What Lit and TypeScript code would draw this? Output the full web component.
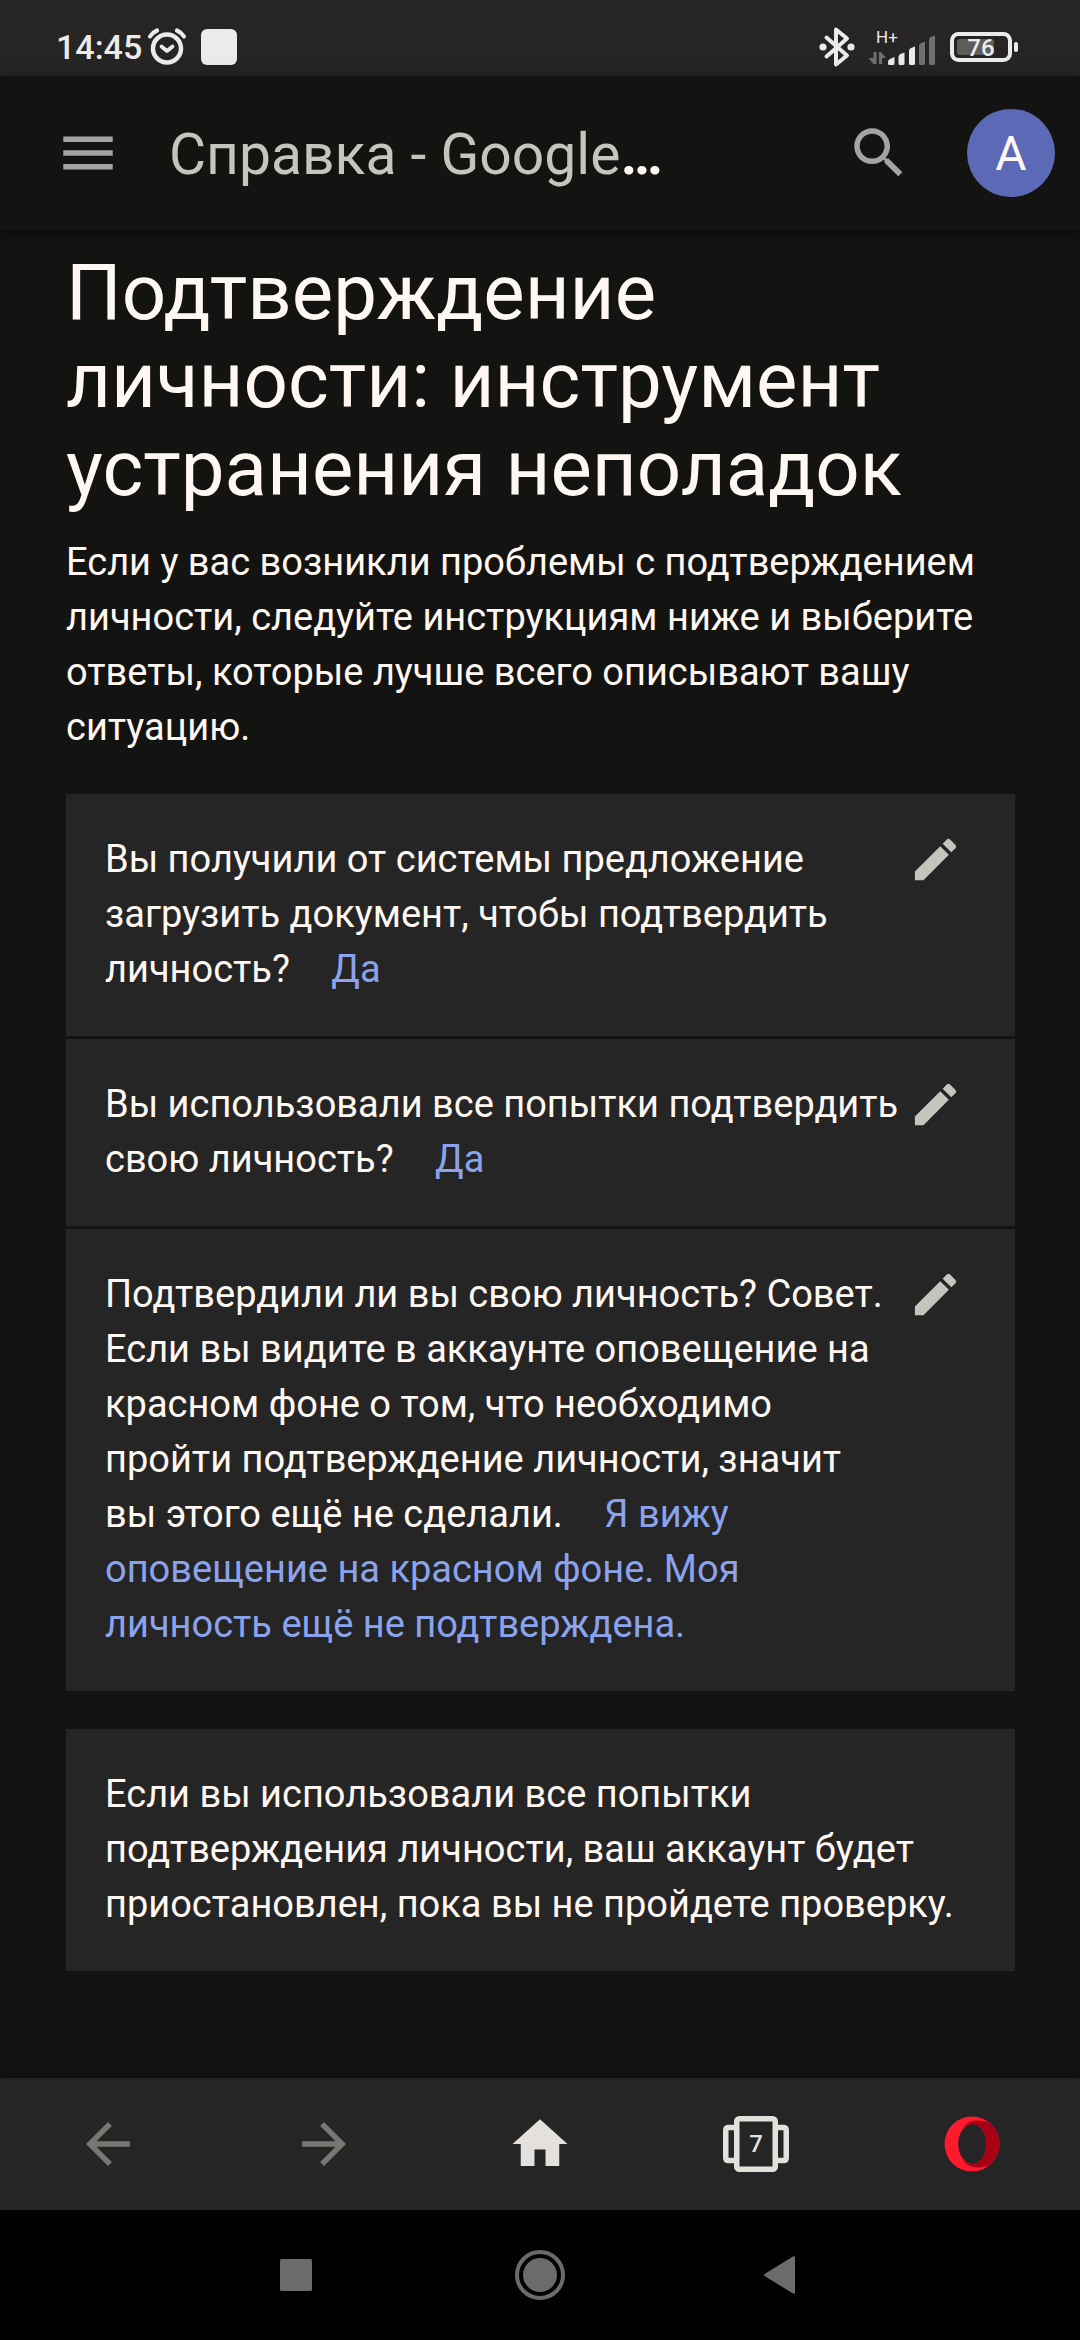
import { LitElement, html, css, svg } from "lit";
import { customElement } from "lit/decorators.js";

interface Step {
  question: string;
  answer: string;
}

const STEPS: Step[] = [
  {
    question: "Вы получили от системы предложение загрузить документ, чтобы подтвердить личность?",
    answer: "Да",
  },
  {
    question: "Вы использовали все попытки подтвердить свою личность?",
    answer: "Да",
  },
  {
    question:
      "Подтвердили ли вы свою личность? Совет. Если вы видите в аккаунте оповещение на красном фоне о том, что необходимо пройти подтверждение личности, значит вы\u00a0этого ещё не сделали.",
    answer: "Я вижу оповещение на красном фоне. Моя личность ещё не подтверждена.",
  },
];

const icon = (d: string) => html`<svg class="icon" viewBox="0 0 24 24" aria-hidden="true">${svg`<path d=${d} />`}</svg>`;

const MENU = "M3 18h18v-2H3v2zm0-5h18v-2H3v2zm0-7v2h18V6H3z";
const SEARCH =
  "M15.5 14h-.79l-.28-.27C15.41 12.59 16 11.11 16 9.5 16 5.91 13.09 3 9.5 3S3 5.91 3 9.5 5.91 16 9.5 16c1.61 0 3.09-.59 4.23-1.57l.27.28v.79l5 4.99L20.49 19l-4.99-5zm-6 0C7.01 14 5 11.99 5 9.5S7.01 5 9.5 5 14 7.01 14 9.5 11.99 14 9.5 14z";
const EDIT =
  "M3 17.25V21h3.75L17.81 9.94l-3.75-3.75L3 17.25zM20.71 7.04a1 1 0 0 0 0-1.41l-2.34-2.34a1 1 0 0 0-1.41 0l-1.83 1.83 3.75 3.75 1.83-1.83z";
const BACK = "M20 11H7.83l5.59-5.59L12 4l-8 8 8 8 1.41-1.41L7.83 13H20v-2z";
const FORWARD = "M12 4l-1.41 1.41L16.17 11H4v2h12.17l-5.58 5.59L12 20l8-8z";
const HOME = "M10 20v-6h4v6h5v-8h3L12 3 2 12h3v8z";

const reset = css`
  :host,
  *,
  *::before,
  *::after {
    box-sizing: border-box;
  }
  button {
    display: flex;
    align-items: center;
    justify-content: center;
    margin: 0;
    padding: 0;
    border: 0;
    background: none;
    color: inherit;
    font: inherit;
    cursor: pointer;
  }
  svg {
    display: block;
    flex: none;
  }
  .icon {
    width: 66px;
    height: 66px;
    fill: currentColor;
  }
`;

@customElement("status-bar")
export class StatusBar extends LitElement {
  static styles = [
    reset,
    css`
      :host {
        display: flex;
        align-items: center;
        justify-content: space-between;
        height: 76px;
        padding: 18px 61px 0 56px;
        background: #262523;
        color: #ebebe9;
        font-family: Roboto, sans-serif;
      }
      .side {
        display: flex;
        align-items: center;
      }
      .time {
        font-size: 34px;
        line-height: 40px;
        font-weight: 500;
      }
      .alarm {
        margin-left: 5px;
      }
      .app {
        width: 36px;
        height: 36px;
        margin-left: 14px;
        border-radius: 6px;
        background: #ebebe9;
      }
      .signal {
        margin-left: 12px;
      }
      .battery {
        margin-left: 11px;
      }
      .net {
        font-size: 17px;
      }
      .level {
        font-size: 24px;
        font-weight: 500;
      }
    `,
  ];

  render() {
    return html`
      <div class="side">
        <span class="time">14:45</span>
        <svg class="alarm" width="40" height="40" viewBox="0 0 40 40" fill="none" stroke="#ebebe9" stroke-linecap="round" stroke-linejoin="round" aria-hidden="true">
          <circle cx="20" cy="21.500" r="14" stroke-width="4.500" />
          <path d="M14.500 19.500l5.500 4.500 5.500-4.500" stroke-width="3.800" />
          <path d="M3 9.500Q5.500 5.500 10 3.500M37 9.500Q34.500 5.500 30 3.500" stroke-width="4.200" />
        </svg>
        <span class="app"></span>
      </div>
      <div class="side">
        <svg width="38" height="42" viewBox="0 0 38 42" fill="none" stroke="#ebebe9" stroke-width="4" stroke-linejoin="round" stroke-linecap="round" aria-hidden="true">
          <path d="M8.500 11.500L29 29.500 18 38.500V3.500L29 12.500 8.500 30.500" />
          <circle cx="5" cy="21" r="3.600" fill="#ebebe9" stroke="none" />
          <circle cx="33" cy="21" r="3.600" fill="#ebebe9" stroke="none" />
        </svg>
        <svg class="signal" width="70" height="40" viewBox="0 0 70 40" fill="#ebebe9" aria-hidden="true">
          <text class="net" x="8" y="16">H+</text>
          <g fill="#71706f">
            <path d="M5.500 25h3v12h-3l-5-6h5zM11 37h3v-6h4l-5-6h-2z" />
            <path d="M51 19q0-2 2-3l4-1.500v22q0 1.500-1.500 1.500h-3q-1.500 0-1.500-1.500zM61 13q0-2 2-3l4-1.500v28q0 1.500-1.500 1.500h-3q-1.500 0-1.500-1.500z" />
          </g>
          <path d="M20 35q0-2 2-3l4.500-2v6.500q0 1.500-1.500 1.500h-3.500q-1.500 0-1.500-1.500zM30.500 30q0-2 2-3l4-1.500v11q0 1.500-1.500 1.500h-3q-1.500 0-1.500-1.500zM41 24q0-2 2-3l4-1.500v17q0 1.500-1.500 1.500h-3q-1.500 0-1.500-1.500z" />
        </svg>
        <svg class="battery" width="70" height="32" viewBox="0 0 70 32" aria-hidden="true">
          <rect x="3" y="3" width="58" height="26" rx="6.500" fill="none" stroke="#ebebe9" stroke-width="4" />
          <rect x="8" y="8" width="37" height="16" rx="3" fill="#5c5c5b" />
          <rect x="65" y="11" width="4" height="10" rx="2" fill="#ebebe9" />
          <text class="level" x="32" y="25" text-anchor="middle" fill="#ebebe9">76</text>
        </svg>
      </div>
    `;
  }
}

@customElement("help-header")
export class HelpHeader extends LitElement {
  static styles = [
    reset,
    css`
      :host {
        display: flex;
        align-items: center;
        height: 154px;
        padding: 0 25px 0 55px;
        background: #131311;
        color: #a3a3a4;
        font-family: Roboto, "Open Sans", sans-serif;
        box-shadow: 0 4px 16px rgba(0, 0, 0, 0.5);
        position: relative;
      }
      .title {
        flex: 1;
        margin-left: 48px;
        padding-top: 4px;
        font-size: 57px;
        line-height: 66px;
        font-weight: 700;
        color: #fff8f2;
        white-space: nowrap;
      }
      .title a {
        color: #c4c5bd;
        font-weight: 400;
        text-decoration: none;
      }
      .avatar {
        width: 88px;
        height: 88px;
        margin-left: 55px;
        border-radius: 50%;
        background: #5c69b7;
        color: #fff8f2;
        font-size: 48px;
      }
    `,
  ];

  render() {
    return html`
      <button aria-label="Меню">${icon(MENU)}</button>
      <div class="title"><a href="#">Справка - Google</a>…</div>
      <button aria-label="Поиск">${icon(SEARCH)}</button>
      <button class="avatar" aria-label="Аккаунт">A</button>
    `;
  }
}

@customElement("help-article")
export class HelpArticle extends LitElement {
  static styles = [
    reset,
    css`
      :host {
        display: block;
        padding: 19px 65px 38px 66px;
        color: #fff8f2;
        font-family: Roboto, "Open Sans", sans-serif;
        font-size: 38px;
        line-height: 55px;
      }
      h1,
      p,
      ol {
        margin: 0;
        padding: 0;
        font-weight: 400;
      }
      h1 {
        font-size: 78px;
        line-height: 88px;
      }
      .intro {
        margin-top: 22px;
      }
      .steps {
        display: grid;
        gap: 3px;
        margin-top: 39px;
        list-style: none;
      }
      .step {
        display: flex;
        align-items: flex-start;
        justify-content: space-between;
        padding: 38px 52px 39px 39px;
        background: #252525;
      }
      .text {
        flex: 1;
      }
      .answer {
        margin-left: 32px;
        color: #8ba3ec;
      }
      .edit {
        color: #c4c5bd;
      }
      .edit .icon {
        width: 55px;
        height: 55px;
      }
      .result {
        margin-top: 38px;
        padding: 38px 39px 39px;
        background: #252525;
      }
    `,
  ];

  render() {
    return html`
      <h1>Подтверждение личности: инструмент устранения неполадок</h1>
      <p class="intro">
        Если у вас возникли проблемы с подтверждением личности, следуйте инструкциям ниже и выберите ответы, которые
        лучше всего описывают вашу ситуацию.
      </p>
      <ol class="steps">
        ${STEPS.map(
          (step) => html`
            <li class="step">
              <p class="text">${step.question} <span class="answer">${step.answer}</span></p>
              <button class="edit" aria-label="Изменить ответ">${icon(EDIT)}</button>
            </li>
          `,
        )}
      </ol>
      <p class="result">
        Если вы использовали все попытки подтверждения личности, ваш аккаунт будет приостановлен, пока вы не пройдете
        проверку.
      </p>
    `;
  }
}

@customElement("browser-bar")
export class BrowserBar extends LitElement {
  static styles = [
    reset,
    css`
      :host {
        display: grid;
        grid-template-columns: repeat(5, 1fr);
        height: 132px;
        background: #252525;
        color: #e4e1dc;
        font-family: Roboto, sans-serif;
        box-shadow: 0 -2px 6px rgba(0, 0, 0, 0.3);
      }
      button:disabled {
        color: #7a7772;
      }
      .count {
        font-size: 24px;
        font-weight: 500;
        fill: #e4e1dc;
      }
    `,
  ];

  render() {
    return html`
      <button aria-label="Назад" disabled>${icon(BACK)}</button>
      <button aria-label="Вперёд" disabled>${icon(FORWARD)}</button>
      <button aria-label="Домой">${icon(HOME)}</button>
      <button aria-label="Вкладки">
        <svg width="66" height="66" viewBox="0 0 66 66" fill="none" stroke="#e4e1dc" stroke-width="5.500" aria-hidden="true">
          <rect x="13.750" y="7.750" width="38.500" height="50.500" rx="2.500" />
          <path d="M13 16.500H5.500q-2.750 0-2.750 2.750v27.500q0 2.750 2.750 2.750H13M53 16.500h7.500q2.750 0 2.750 2.750v27.500q0 2.750-2.750 2.750H53" />
          <text class="count" x="33" y="41" text-anchor="middle" stroke="none">7</text>
        </svg>
      </button>
      <button aria-label="Opera">
        <svg width="56" height="56" viewBox="0 0 56 56" fill-rule="evenodd" aria-hidden="true">
          <path fill="#ff1b2d" d="M28 .500a27.500 27.500 0 1 0 0 55 27.500 27.500 0 0 0 0-55zM28.500 8c7.700 0 14 9 14 20s-6.300 20-14 20-14.300-9-14.300-20S20.800 8 28.500 8z" />
          <path fill="#a70014" d="M18.500 12.200C22 7.500 27 4.500 32.500 4.500c4.500 0 8 .800 11.500 1.200a27.500 27.500 0 0 1 0 44.600c-3.500.4-7 1.200-11.500 1.200-5.500 0-10.500-3-14-7.700 2.600 2.700 6 4.200 10 4.200 7.700 0 14-9 14-20S36.200 8 28.500 8c-4 0-7.400 1.500-10 4.200z" />
        </svg>
      </button>
    `;
  }
}

@customElement("system-nav")
export class SystemNav extends LitElement {
  static styles = [
    reset,
    css`
      :host {
        display: flex;
        align-items: center;
        justify-content: center;
        gap: 180px;
        height: 130px;
        background: #000;
      }
      svg {
        width: 64px;
        height: 64px;
        fill: #6b6b6b;
      }
    `,
  ];

  render() {
    return html`
      <button aria-label="Недавние">
        <svg viewBox="0 0 64 64"><rect x="16" y="16" width="32" height="32" rx="1.500" /></svg>
      </button>
      <button aria-label="Главный экран">
        <svg viewBox="0 0 64 64">
          <circle cx="32" cy="32" r="17" />
          <circle cx="32" cy="32" r="23" fill="none" stroke="#6b6b6b" stroke-width="4" />
        </svg>
      </button>
      <button aria-label="Назад">
        <svg viewBox="0 0 64 64"><path d="M12.600 31q-1.200 1 0 2l28.400 17.500q2 1 2-1v-35q0-2-2-1z" /></svg>
      </button>
    `;
  }
}

@customElement("app-root")
export class AppRoot extends LitElement {
  static styles = css`
    :host {
      display: flex;
      flex-direction: column;
      min-height: 100vh;
      background: #131311;
    }
    .page {
      flex: 1;
    }
  `;

  render() {
    return html`
      <status-bar></status-bar>
      <help-header></help-header>
      <help-article class="page"></help-article>
      <browser-bar></browser-bar>
      <system-nav></system-nav>
    `;
  }
}
